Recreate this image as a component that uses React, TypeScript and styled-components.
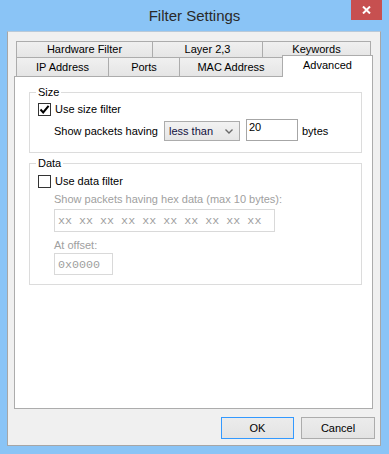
import React from "react";
import styled, { createGlobalStyle } from "styled-components";

const Global = createGlobalStyle`
  html, body { margin: 0; padding: 0; background: #8ac4f6; }
  body { font-family: "Liberation Sans", Arial, sans-serif; font-size: 11px; color: #000; }
  * { box-sizing: border-box; }
`;

const Window = styled.div`
  width: 389px;
  height: 454px;
  background: #8ac4f6;
  display: flex;
  flex-direction: column;
`;

const TitleBar = styled.div`
  height: 31px;
  flex: none;
  display: grid;
  grid-template-columns: 1fr auto 1fr;
  padding: 0 7px;
`;

const Title = styled.div`
  grid-column: 2;
  align-self: center;
  font-size: 15px;
  line-height: 18px;
  color: #2a2a2a;
  padding-top: 1px;
`;

const CloseButton = styled.div`
  grid-column: 3;
  justify-self: end;
  align-self: start;
  width: 31px;
  height: 20px;
  background: #c75050;
  display: flex;
  align-items: center;
  justify-content: center;
`;

const Client = styled.div`
  flex: 1;
  margin: 0 8px 8px 7px;
  background: #f0f0f0;
  border: 1px solid #a6a6a6;
  border-top-color: #b9c9d8;
  padding: 9px 7px 0 6px;
  display: flex;
  flex-direction: column;
`;

const TabRow = styled.div<{ $second?: boolean }>`
  display: flex;
  align-items: flex-end;
  height: ${(p) => (p.$second ? 19 : 17)}px;
  padding-left: 2px;
  margin-top: ${(p) => (p.$second ? -1 : 0)}px;
`;

const Tab = styled.div<{ $w: number; $active?: boolean; $open?: boolean }>`
  flex: none;
  width: ${(p) => p.$w}px;
  height: ${(p) => (p.$active ? 22 : p.$open ? 19 : 17)}px;
  margin-left: -1px;
  &:first-child { margin-left: 0; }
  margin-bottom: ${(p) => (p.$active ? -1 : 0)}px;
  border: 1px solid #acacac;
  border-bottom: ${(p) => (p.$open || p.$active ? "none" : "1px solid #acacac")};
  background: ${(p) => (p.$active ? "#fff" : "linear-gradient(#f0f0f0, #e5e5e5)")};
  position: relative;
  z-index: ${(p) => (p.$active ? 2 : 0)};
  display: flex;
  justify-content: center;
  align-items: ${(p) => (p.$active ? "flex-start" : "center")};
  padding-top: ${(p) => (p.$active ? 3 : 0)}px;
  line-height: 13px;
  white-space: nowrap;
`;

const Panel = styled.div`
  height: 333px;
  background: #fff;
  border: 1px solid #acacac;
  position: relative;
  z-index: 1;
  display: flex;
  flex-direction: column;
`;

const Group = styled.fieldset<{ $top: number }>`
  margin: ${(p) => p.$top}px 10px 0 14px;
  padding: 0;
  border: 1px solid #dcdcdc;
  min-width: 0;
`;

const Legend = styled.legend`
  margin-left: 6px;
  padding: 0 2px;
  line-height: 13px;
  font-size: 11px;
`;

const GroupBody = styled.div<{ $top: number; $bottom: number }>`
  padding: ${(p) => p.$top}px 0 ${(p) => p.$bottom}px 8px;
  display: flex;
  flex-direction: column;
`;

const CheckRow = styled.div`
  display: flex;
  align-items: center;
  height: 13px;
  gap: 4px;
  line-height: 13px;
`;

const Box = styled.span`
  width: 13px;
  height: 13px;
  border: 1px solid #333;
  background: #fff;
  display: flex;
  align-items: center;
  justify-content: center;
  flex: none;
`;

const FieldRow = styled.div`
  display: flex;
  align-items: flex-end;
  height: 22px;
  margin-top: 3px;
  padding-left: 16px;
`;

const RowLabel = styled.span<{ $w?: number }>`
  width: ${(p) => (p.$w ? `${p.$w}px` : "auto")};
  line-height: 20px;
  flex: none;
`;

const Combo = styled.div`
  width: 76px;
  height: 20px;
  border: 1px solid #acacac;
  background: linear-gradient(#f2f2f2, #e6e6e6);
  display: flex;
  align-items: center;
  justify-content: space-between;
  padding: 0 6px 0 4px;
  color: #101040;
  line-height: 13px;
  flex: none;
`;

const TextBox = styled.div<{ $w: number; $h: number; $disabled?: boolean; $mono?: boolean }>`
  width: ${(p) => p.$w}px;
  height: ${(p) => p.$h}px;
  border: 1px solid ${(p) => (p.$disabled ? "#d9d9d9" : "#a6a6a6")};
  background: #fff;
  color: ${(p) => (p.$disabled ? "#a0a0a0" : "#000")};
  font-family: ${(p) => (p.$mono ? '"Liberation Mono", "Courier New", monospace' : "inherit")};
  font-size: ${(p) => (p.$mono ? "11.7px" : "11px")};
  line-height: 13px;
  padding: ${(p) => (p.$mono ? "5px 3px 0 3px" : "1px 2px 0 2px")};
  flex: none;
  white-space: pre;
  overflow: hidden;
`;

const DimLabel = styled.div<{ $top: number }>`
  color: #a0a0a0;
  line-height: 13px;
  margin-top: ${(p) => p.$top}px;
  padding-left: 16px;
`;

const Indented = styled.div<{ $top: number }>`
  margin-top: ${(p) => p.$top}px;
  padding-left: 16px;
  display: flex;
`;

const ButtonRow = styled.div`
  display: flex;
  justify-content: flex-end;
  gap: 7px;
  margin: 8px -2px 0 0;
`;

const Button = styled.div<{ $default?: boolean; $w: number }>`
  width: ${(p) => p.$w}px;
  height: 22px;
  border: 1px solid ${(p) => (p.$default ? "#3399ff" : "#acacac")};
  background: linear-gradient(#ececec, #e3e3e3);
  display: flex;
  align-items: center;
  justify-content: center;
  line-height: 13px;
`;

const Check = () => (
  <svg width="11" height="11" viewBox="0 0 11 11">
    <path d="M1.5 5.5 L4.2 8.4 L9.6 1.8" fill="none" stroke="#000" strokeWidth="2" />
  </svg>
);

const Chevron = () => (
  <svg width="8" height="5" viewBox="0 0 8 5">
    <path d="M0.5 0.5 L4 4 L7.5 0.5" fill="none" stroke="#6a6a6a" strokeWidth="1.4" />
  </svg>
);

const CloseX = () => (
  <svg width="9" height="8" viewBox="0 0 9 8">
    <path d="M1 0.5 L8 7.5 M8 0.5 L1 7.5" stroke="#fff" strokeWidth="2" />
  </svg>
);

export default function App() {
  return (
    <>
      <Global />
      <Window>
        <TitleBar>
          <Title>Filter Settings</Title>
          <CloseButton>
            <CloseX />
          </CloseButton>
        </TitleBar>
        <Client>
          <TabRow>
            <Tab $w={137}>Hardware Filter</Tab>
            <Tab $w={111}>Layer 2,3</Tab>
            <Tab $w={109}>Keywords</Tab>
          </TabRow>
          <TabRow $second>
            <Tab $w={93} $open>IP Address</Tab>
            <Tab $w={72} $open>Ports</Tab>
            <Tab $w={104} $open>MAC Address</Tab>
            <Tab $w={91} $active>Advanced</Tab>
          </TabRow>
          <Panel>
            <Group $top={9}>
              <Legend>Size</Legend>
              <GroupBody $top={4} $bottom={11}>
                <CheckRow>
                  <Box>
                    <Check />
                  </Box>
                  Use size filter
                </CheckRow>
                <FieldRow>
                  <RowLabel $w={110}>Show packets having</RowLabel>
                  <Combo>
                    <span>less than</span>
                    <Chevron />
                  </Combo>
                  <TextBox $w={52} $h={22} style={{ marginLeft: 6 }}>
                    20
                  </TextBox>
                  <RowLabel style={{ marginLeft: 4 }}>bytes</RowLabel>
                </FieldRow>
              </GroupBody>
            </Group>
            <Group $top={4}>
              <Legend>Data</Legend>
              <GroupBody $top={5} $bottom={9}>
                <CheckRow>
                  <Box />
                  Use data filter
                </CheckRow>
                <DimLabel $top={5}>Show packets having hex data (max 10 bytes):</DimLabel>
                <Indented $top={3}>
                  <TextBox $w={221} $h={23} $disabled $mono>
                    xx xx xx xx xx xx xx xx xx xx
                  </TextBox>
                </Indented>
                <DimLabel $top={7}>At offset:</DimLabel>
                <Indented $top={1}>
                  <TextBox $w={59} $h={22} $disabled $mono>
                    0x0000
                  </TextBox>
                </Indented>
              </GroupBody>
            </Group>
          </Panel>
          <ButtonRow>
            <Button $default $w={73}>OK</Button>
            <Button $w={74}>Cancel</Button>
          </ButtonRow>
        </Client>
      </Window>
    </>
  );
}
